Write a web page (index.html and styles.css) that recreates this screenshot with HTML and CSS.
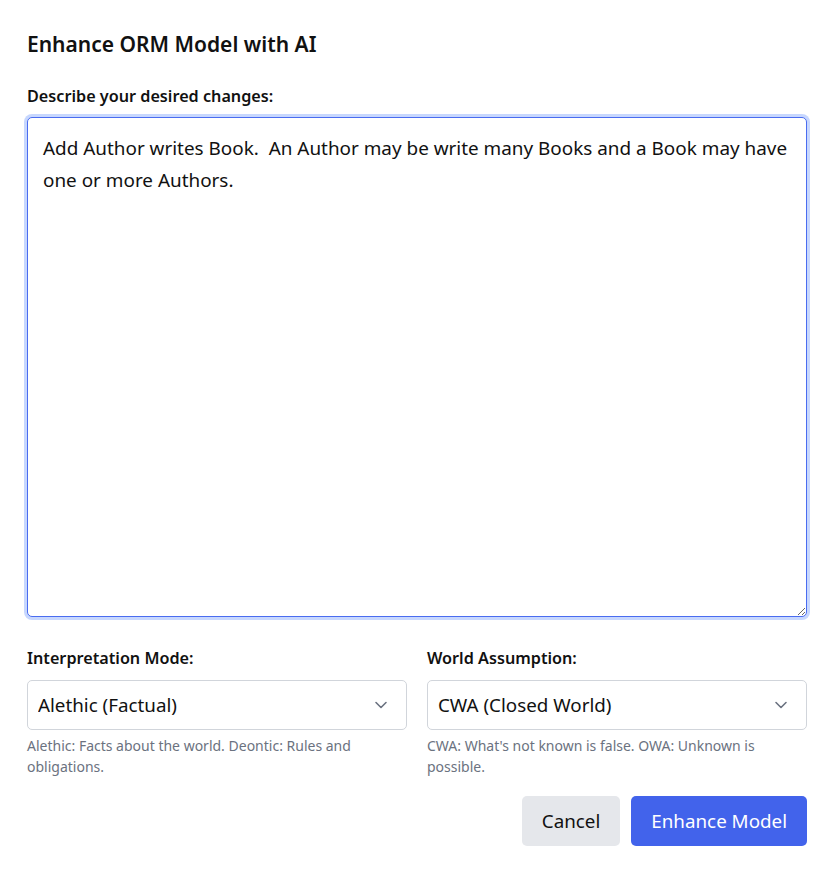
FILE: index.html
```html
<!DOCTYPE html>
<html>
<head>
<meta charset="utf-8">
<link rel="stylesheet" href="styles.css">
</head>
<body>
<div class="dialog">
  <h2 class="title">Enhance ORM Model with AI</h2>
  <label class="label label-main" for="desc">Describe your desired changes:</label>
  <textarea id="desc" class="textarea">Add Author writes Book.  An Author may be write many Books and a Book may have one or more Authors.</textarea>
  <div class="grid">
    <div class="field">
      <label class="label label-field">Interpretation Mode:</label>
      <div class="select-wrap">
        <select class="select">
          <option>Alethic (Factual)</option>
          <option>Deontic (Normative)</option>
        </select>
        <svg class="chevron" viewBox="0 0 20 20" width="20" height="20"><path d="M5 7.5l5 5 5-5" fill="none" stroke="#6b7280" stroke-width="1.6" stroke-linecap="round" stroke-linejoin="round"/></svg>
      </div>
      <p class="help">Alethic: Facts about the world. Deontic: Rules and obligations.</p>
    </div>
    <div class="field">
      <label class="label label-field">World Assumption:</label>
      <div class="select-wrap">
        <select class="select">
          <option>CWA (Closed World)</option>
          <option>OWA (Open World)</option>
        </select>
        <svg class="chevron" viewBox="0 0 20 20" width="20" height="20"><path d="M5 7.5l5 5 5-5" fill="none" stroke="#6b7280" stroke-width="1.6" stroke-linecap="round" stroke-linejoin="round"/></svg>
      </div>
      <p class="help">CWA: What's not known is false. OWA: Unknown is possible.</p>
    </div>
  </div>
  <div class="actions">
    <button class="btn btn-cancel">Cancel</button>
    <button class="btn btn-primary">Enhance Model</button>
  </div>
</div>
</body>
</html>
```
FILE: styles.css
```css
* { box-sizing: border-box; }
html, body { margin: 0; padding: 0; background: #ffffff; }
body {
  font-family: "Noto Sans", "Open Sans", sans-serif;
  color: #111111;
}
.dialog {
  width: 780px;
  margin-left: 27px;
  padding-top: 30px;
  display: flex;
  flex-direction: column;
}
.title {
  margin: 0;
  font-size: 21px;
  line-height: 28px;
  font-weight: 600;
}
.label {
  display: block;
  font-size: 16.2px;
  line-height: 24px;
  font-weight: 600;
}
.label-main { margin-top: 26px; margin-bottom: 9px; }
.label-field { margin-bottom: 10px; }
.textarea {
  display: block;
  width: 780px;
  height: 500px;
  margin: 0;
  padding: 14px 8px 14px 15px;
  border: 1px solid #4a6cf0;
  border-radius: 5px;
  box-shadow: 0 0 0 3px #c7d7fe;
  outline: none;
  font-family: inherit;
  font-size: 18.9px;
  line-height: 32px;
  color: #111111;
  resize: vertical;
}
.grid {
  margin-top: 29px;
  display: grid;
  grid-template-columns: 1fr 1fr;
  column-gap: 20px;
}
.field { display: flex; flex-direction: column; }
.select-wrap { position: relative; }
.select {
  -webkit-appearance: none;
  appearance: none;
  width: 100%;
  height: 50px;
  margin: 0;
  padding: 0 40px 0 10px;
  border: 1px solid #d1d5db;
  border-radius: 5px;
  background: #ffffff;
  font-family: inherit;
  font-size: 18.8px;
  color: #111111;
}
.chevron {
  position: absolute;
  right: 16px;
  top: 15px;
  pointer-events: none;
}
.help {
  margin: 5px 0 0;
  font-size: 14px;
  line-height: 21px;
  color: #6b7280;
}
.actions {
  margin-top: 19px;
  display: flex;
  justify-content: flex-end;
  gap: 11px;
}
.btn {
  height: 50px;
  border: none;
  border-radius: 5px;
  font-family: inherit;
  font-size: 18.8px;
  padding: 0 20px;
}
.btn-cancel { background: #e5e7eb; color: #111111; }
.btn-primary { background: #4263eb; color: #ffffff; }
```
